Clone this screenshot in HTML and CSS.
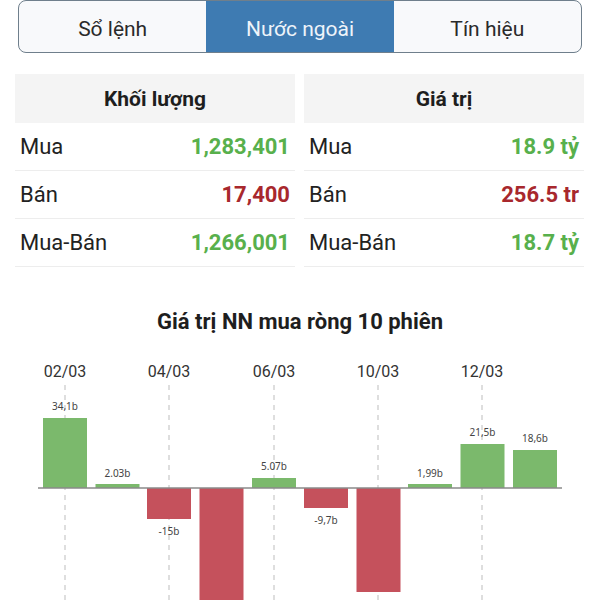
FILE: index.html
```html
<!DOCTYPE html>
<html lang="vi">
<head>
<meta charset="UTF-8">
<meta name="viewport" content="width=device-width, initial-scale=1.0">
<title>Nước ngoài</title>
<link rel="stylesheet" href="styles.css">
</head>
<body>
<div class="tabs">
  <div class="tab">Sổ lệnh</div>
  <div class="tab active">Nước ngoài</div>
  <div class="tab">Tín hiệu</div>
</div>

<div class="summary">
  <table class="stats">
    <tr><th colspan="2">Khối lượng</th></tr>
    <tr><td>Mua</td><td class="num up">1,283,401</td></tr>
    <tr><td>Bán</td><td class="num down">17,400</td></tr>
    <tr><td>Mua-Bán</td><td class="num up">1,266,001</td></tr>
  </table>
  <table class="stats">
    <tr><th colspan="2">Giá trị</th></tr>
    <tr><td>Mua</td><td class="num up">18.9 tỷ</td></tr>
    <tr><td>Bán</td><td class="num down">256.5 tr</td></tr>
    <tr><td>Mua-Bán</td><td class="num up">18.7 tỷ</td></tr>
  </table>
</div>

<h2 class="chart-title">Giá trị NN mua ròng 10 phiên</h2>
<!-- net foreign buy value, 10 sessions; zero line at y=148 -->
<svg class="chart" width="600" height="260" viewBox="0 0 600 260">
  <g class="grid">
    <line x1="65" y1="45" x2="65" y2="260"/>
    <line x1="169" y1="45" x2="169" y2="260"/>
    <line x1="274" y1="45" x2="274" y2="260"/>
    <line x1="378" y1="45" x2="378" y2="260"/>
    <line x1="482" y1="45" x2="482" y2="260"/>
  </g>
  <g class="dates">
    <text x="65" y="37">02/03</text>
    <text x="169" y="37">04/03</text>
    <text x="274" y="37">06/03</text>
    <text x="378" y="37">10/03</text>
    <text x="482" y="37">12/03</text>
  </g>
  <g class="bars">
    <rect class="pos" x="43" y="78" width="44" height="70"/>
    <rect class="pos" x="95.5" y="144" width="44" height="4"/>
    <rect class="neg" x="147" y="148" width="44" height="31"/>
    <rect class="neg" x="199.5" y="148" width="44" height="130"/>
    <rect class="pos" x="252" y="138" width="44" height="10"/>
    <rect class="neg" x="304" y="148" width="44" height="20"/>
    <rect class="neg" x="356.5" y="148" width="44" height="104"/>
    <rect class="pos" x="408" y="144" width="44" height="4"/>
    <rect class="pos" x="460.5" y="104" width="44" height="44"/>
    <rect class="pos" x="513" y="110" width="44" height="38"/>
  </g>
  <g class="labels">
    <text x="65" y="70">34,1b</text>
    <text x="117.5" y="137">2.03b</text>
    <text x="169" y="195">-15b</text>
    <text x="274" y="130">5.07b</text>
    <text x="326" y="184">-9,7b</text>
    <text x="430" y="137">1,99b</text>
    <text x="482.5" y="96">21,5b</text>
    <text x="535" y="102">18,6b</text>
  </g>
  <line class="axis" x1="38" y1="148" x2="562" y2="148"/>
</svg>
</body>
</html>
```

FILE: styles.css
```css
body {
    margin: 0;
    background: #fff;
    font-family: Roboto, "Noto Sans", sans-serif;
    color: #222;
    overflow: hidden;
}

/* top tabs */
.tabs {
    display: flex;
    margin: 0 18px;
    height: 51px;
    border: 1.5px solid #6f7f8c;
    border-radius: 8px;
    overflow: hidden;
    background: #f8f9fb;
}
.tab {
    flex: 1;
    display: flex;
    align-items: center;
    justify-content: center;
    padding-top: 4px;
    font-size: 21px;
    color: #2a2a2a;
}
.tab.active {
    background: #3e7bb2;
    color: #eef4fa;
}

/* volume / value tables */
.summary {
    display: flex;
    gap: 9px;
    padding: 21px 16px 0 15px;
}
.stats {
    flex: 1;
    border-collapse: collapse;
}
.stats th {
    height: 49px;
    padding: 0;
    background: #f4f4f4;
    font-size: 21px;
    font-weight: 700;
    color: #1e1e1e;
}
.stats td {
    height: 47px;
    padding: 0 5px;
    border-bottom: 1px solid #ededed;
    font-size: 22px;
}
.stats td.num {
    text-align: right;
    font-weight: 700;
}
.up { color: #58b04c; }
.down { color: #a8282d; }

/* chart */
.chart-title {
    margin: 43px 0 0;
    text-align: center;
    font-size: 22px;
    line-height: 24px;
    font-weight: 700;
    color: #1e1e1e;
}
.chart {
    display: block;
    margin-top: 6px;
}
.grid line {
    stroke: #bdbdbd;
    stroke-width: 1;
    stroke-dasharray: 5 5;
}
.dates text {
    font-family: Roboto, sans-serif;
    font-size: 16px;
    fill: #333;
    text-anchor: middle;
}
.bars .pos { fill: #7bb96c; }
.bars .neg { fill: #c5515c; }
.labels text {
    font-family: "Noto Sans", sans-serif;
    font-size: 10px;
    fill: #444;
    text-anchor: middle;
}
.axis {
    stroke: #8a8a8a;
    stroke-width: 1.5;
}
```
